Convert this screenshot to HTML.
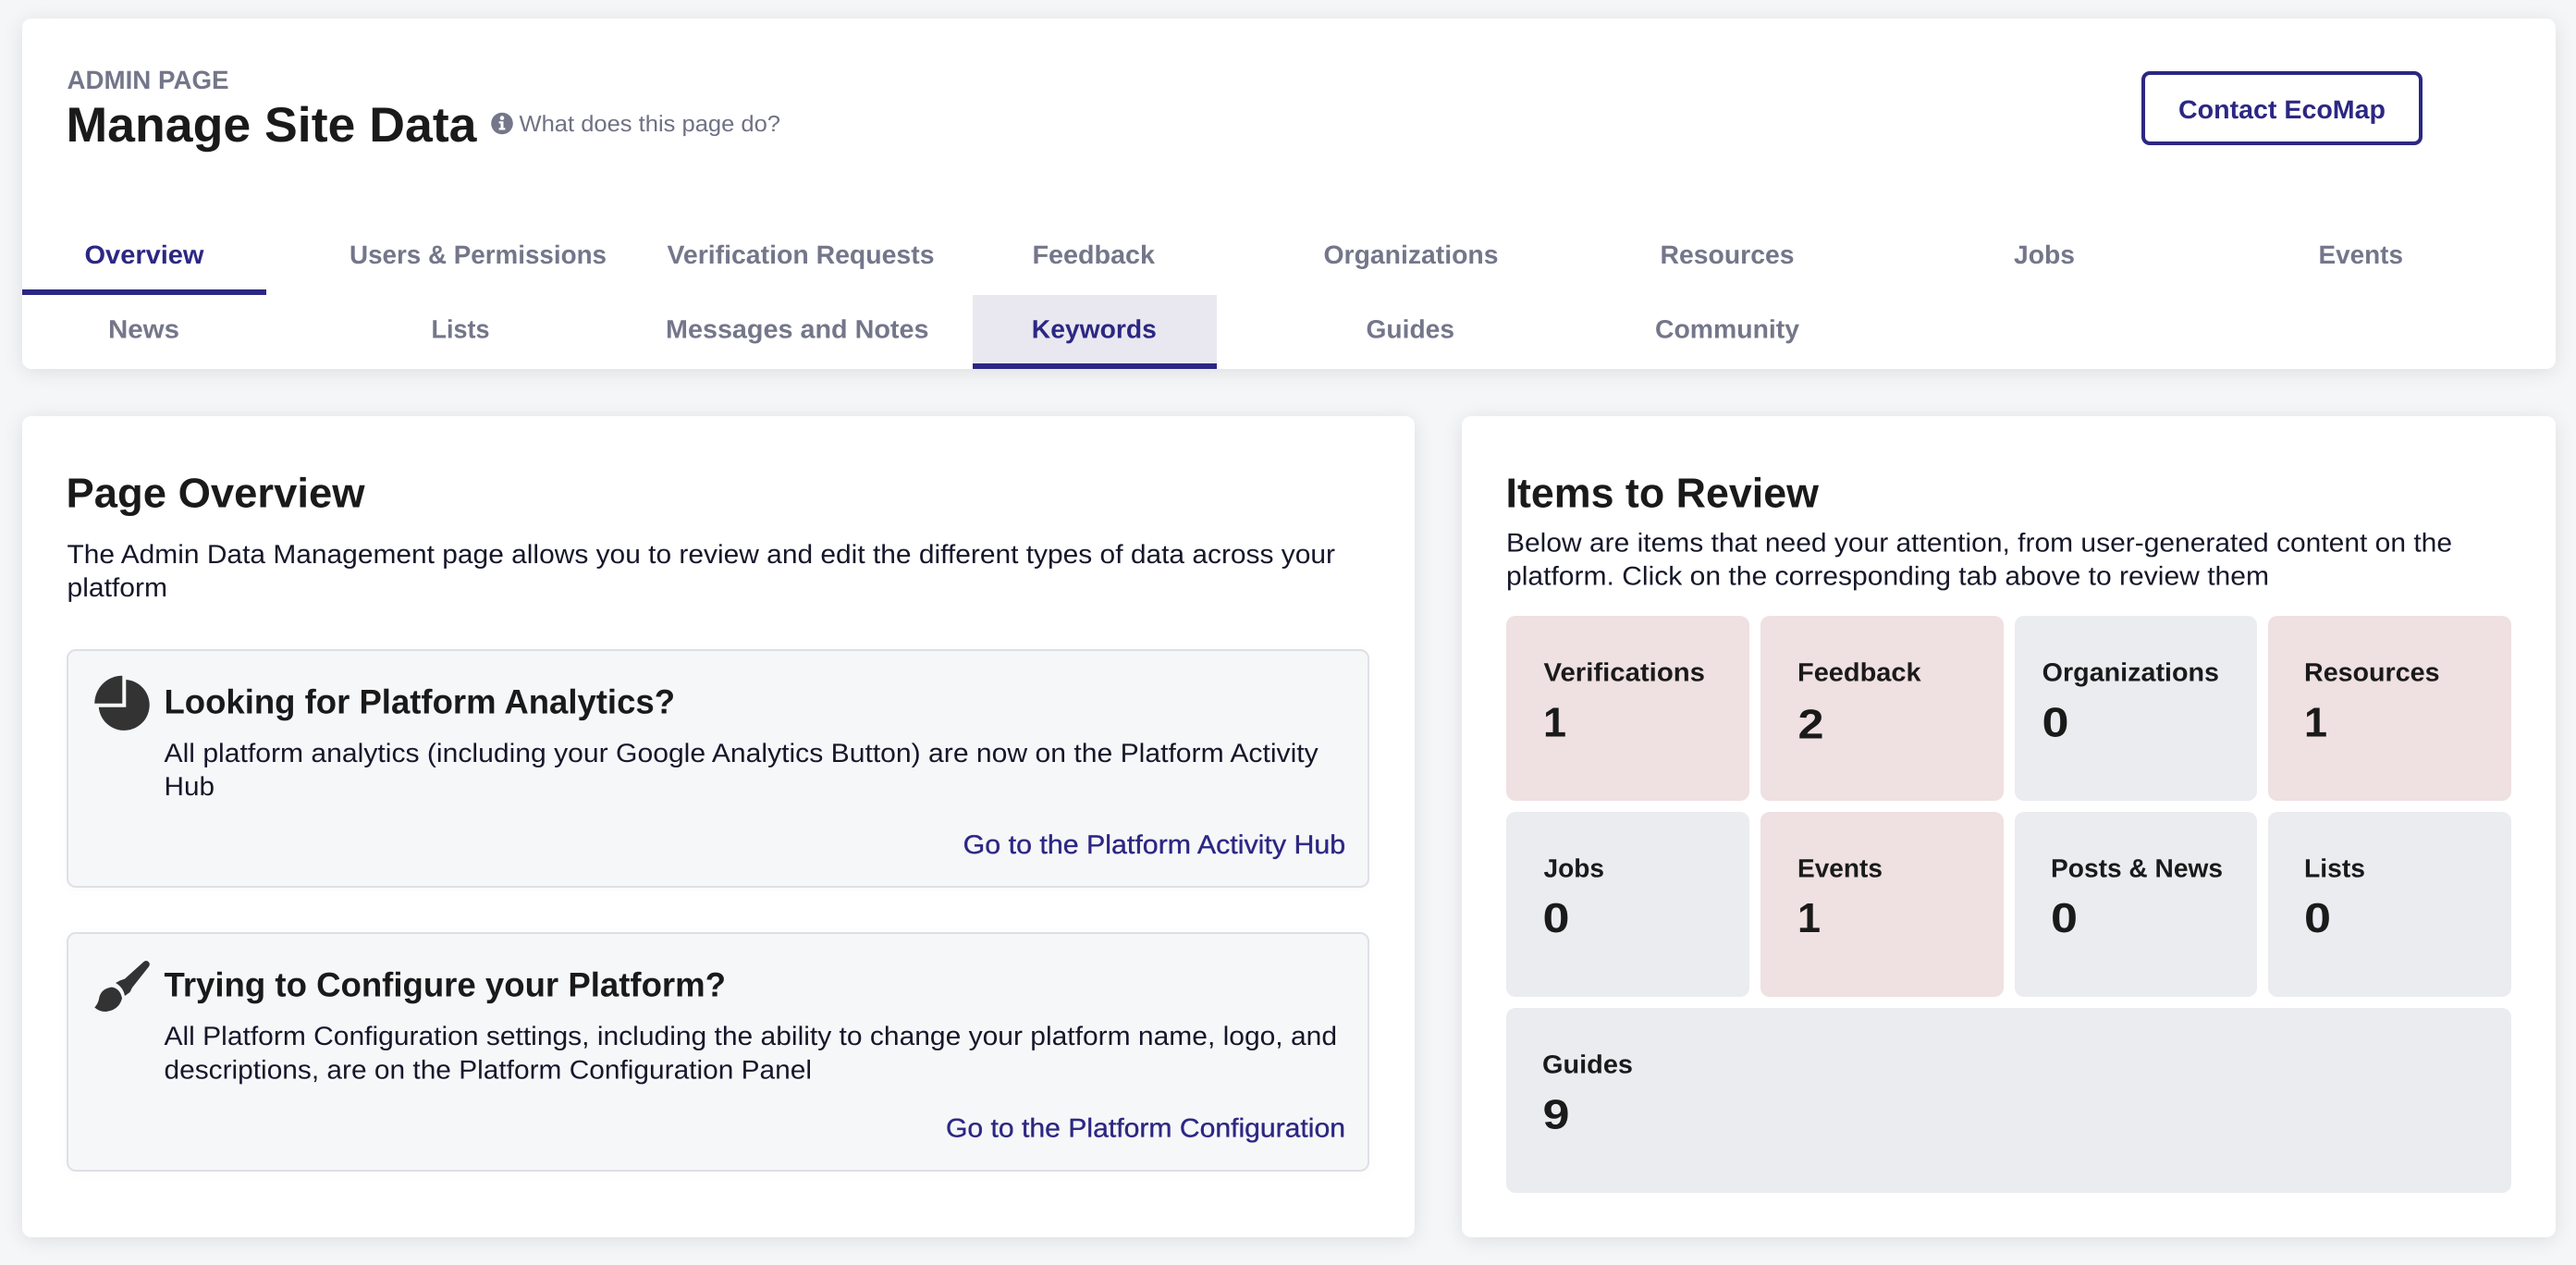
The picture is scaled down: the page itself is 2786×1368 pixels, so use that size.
<!DOCTYPE html>
<html lang="en">
<head>
<meta charset="utf-8">
<title>Manage Site Data</title>
<style>
html,body{margin:0;padding:0;width:2786px;height:1368px;overflow:hidden;background:#f5f6f8}
.abs{position:absolute;box-sizing:border-box}
.card{background:#fff;border-radius:10px;box-shadow:0 3px 22px rgba(0,0,0,.10)}
.inner{background:#f6f7f9;border:2px solid #dfe0e6;border-radius:10px;box-shadow:0 2px 14px rgba(0,0,0,.025)}
.tile{background:#ebecf0;border-radius:10px}
.red{background:#efe0e2}
svg{position:absolute;left:0;top:0}
text{font-family:"Liberation Sans",Arial,sans-serif;white-space:pre;text-rendering:geometricPrecision}
.h1{font-size:53px;font-weight:700;fill:#1a1a1a}
.h2{font-size:45px;font-weight:700;fill:#1a1a1a}
.h3{font-size:37px;font-weight:700;fill:#1a1a1a}
.p{font-size:28.5px;fill:#16172a}
.lnk{font-size:28.5px;fill:#2c2783;stroke:#2c2783;stroke-width:.35}
.tab{font-size:28px;font-weight:700;fill:#74768a}
.on{fill:#2c2783}
.lab{font-size:28px;font-weight:700;fill:#1a1a1a}
.num{font-size:45px;font-weight:700;fill:#1a1a1a}
</style>
</head>
<body>
<div class="abs card" style="left:24px;top:20px;width:2740px;height:379px"></div>
<div class="abs" style="left:24px;top:313px;width:264px;height:6px;background:#2c2783"></div>
<div class="abs" style="left:1052px;top:319px;width:264px;height:80px;background:#e9e8f0;border-bottom:6px solid #2c2783"></div>
<div class="abs" style="left:2316px;top:77px;width:304px;height:80px;border:4px solid #2c2783;border-radius:9px;background:#fff"></div>

<div class="abs card" style="left:24px;top:450px;width:1506px;height:888px"></div>
<div class="abs card" style="left:1581px;top:450px;width:1183px;height:888px"></div>

<div class="abs inner" style="left:72px;top:702px;width:1409px;height:258px"></div>
<div class="abs inner" style="left:72px;top:1008px;width:1409px;height:259px"></div>

<div class="abs tile red" style="left:1629px;top:666px;width:263px;height:200px"></div>
<div class="abs tile red" style="left:1904px;top:666px;width:263px;height:200px"></div>
<div class="abs tile" style="left:2179px;top:666px;width:262px;height:200px"></div>
<div class="abs tile red" style="left:2453px;top:666px;width:263px;height:200px"></div>
<div class="abs tile" style="left:1629px;top:878px;width:263px;height:200px"></div>
<div class="abs tile red" style="left:1904px;top:878px;width:263px;height:200px"></div>
<div class="abs tile" style="left:2179px;top:878px;width:262px;height:200px"></div>
<div class="abs tile" style="left:2453px;top:878px;width:263px;height:200px"></div>
<div class="abs tile" style="left:1629px;top:1090px;width:1087px;height:200px"></div>

<svg width="2786" height="1368" viewBox="0 0 2786 1368" xmlns="http://www.w3.org/2000/svg">
  <!-- header -->
  <text x="72.5" y="96" font-size="28" font-weight="700" fill="#74768a" textLength="175" lengthAdjust="spacingAndGlyphs">ADMIN PAGE</text>
  <text class="h1" x="71.5" y="153" textLength="444" lengthAdjust="spacingAndGlyphs">Manage Site Data</text>
  <circle cx="543" cy="133.5" r="11.8" fill="#74768a"/>
  <circle cx="543" cy="127.6" r="2.3" fill="#fff"/>
  <path d="M539.6 131.2h4.9v7h1.9v2.3h-6.8v-2.3h1.9v-4.7h-1.9z" fill="#fff"/>
  <text x="561.5" y="142" font-size="24.5" fill="#6f7184" textLength="282.5" lengthAdjust="spacingAndGlyphs">What does this page do?</text>
  <text x="2356" y="128" font-size="28" font-weight="700" fill="#2c2783" textLength="224" lengthAdjust="spacingAndGlyphs">Contact EcoMap</text>

  <!-- tabs -->
  <text class="tab on" x="91.5" y="285" textLength="129" lengthAdjust="spacingAndGlyphs">Overview</text>
  <text class="tab" x="378" y="285" textLength="278" lengthAdjust="spacingAndGlyphs">Users &amp; Permissions</text>
  <text class="tab" x="721.5" y="285" textLength="289" lengthAdjust="spacingAndGlyphs">Verification Requests</text>
  <text class="tab" x="1116.5" y="285" textLength="132.5" lengthAdjust="spacingAndGlyphs">Feedback</text>
  <text class="tab" x="1431.5" y="285" textLength="189" lengthAdjust="spacingAndGlyphs">Organizations</text>
  <text class="tab" x="1795.5" y="285" textLength="145" lengthAdjust="spacingAndGlyphs">Resources</text>
  <text class="tab" x="2178" y="285" textLength="66" lengthAdjust="spacingAndGlyphs">Jobs</text>
  <text class="tab" x="2507.5" y="285" textLength="91.5" lengthAdjust="spacingAndGlyphs">Events</text>
  <text class="tab" x="117" y="365.5" textLength="77" lengthAdjust="spacingAndGlyphs">News</text>
  <text class="tab" x="466.5" y="365.5" textLength="63" lengthAdjust="spacingAndGlyphs">Lists</text>
  <text class="tab" x="720" y="365.5" textLength="284.5" lengthAdjust="spacingAndGlyphs">Messages and Notes</text>
  <text class="tab on" x="1115.8" y="365.5" textLength="135" lengthAdjust="spacingAndGlyphs">Keywords</text>
  <text class="tab" x="1477.5" y="365.5" textLength="95.5" lengthAdjust="spacingAndGlyphs">Guides</text>
  <text class="tab" x="1790" y="365.5" textLength="156" lengthAdjust="spacingAndGlyphs">Community</text>

  <!-- page overview -->
  <text class="h2" x="71.5" y="548.3" textLength="323" lengthAdjust="spacingAndGlyphs">Page Overview</text>
  <text class="p" x="72.5" y="609" textLength="1371.5" lengthAdjust="spacingAndGlyphs">The Admin Data Management page allows you to review and edit the different types of data across your</text>
  <text class="p" x="72.5" y="645" textLength="108.5" lengthAdjust="spacingAndGlyphs">platform</text>

  <!-- pie icon -->
  <path d="M102.3 760.7A30 30 0 0 1 132.3 730.7V760.7Z" fill="#333"/>
  <path d="M136.3 735A27.5 27.5 0 1 1 106.8 764.7H136.3Z" fill="#333"/>
  <text class="h3" x="177.5" y="771.7" textLength="552.5" lengthAdjust="spacingAndGlyphs">Looking for Platform Analytics?</text>
  <text class="p" x="177.5" y="824" textLength="1248.2" lengthAdjust="spacingAndGlyphs">All platform analytics (including your Google Analytics Button) are now on the Platform Activity</text>
  <text class="p" x="177.5" y="860" textLength="54.5" lengthAdjust="spacingAndGlyphs">Hub</text>
  <text class="lnk" x="1041.7" y="923" textLength="413.5" lengthAdjust="spacingAndGlyphs">Go to the Platform Activity Hub</text>

  <!-- brush icon -->
  <path d="M155.5 1040Q158.5 1037.7 161 1040.5Q162.8 1043 160.8 1045.5L143 1068L140.5 1073L135 1077Q133.5 1067.5 125 1063L129.5 1060.5L135 1058.5Z" fill="#333"/>
  <path d="M121 1067.5Q110 1069 107.5 1078Q106.5 1085 102.3 1089.5Q108 1094.5 115 1094Q129 1092 132 1079.5Q130 1069 121 1067.5Z" fill="#333"/>
  <text class="h3" x="177.5" y="1077.7" textLength="607.5" lengthAdjust="spacingAndGlyphs">Trying to Configure your Platform?</text>
  <text class="p" x="177.5" y="1130" textLength="1268.5" lengthAdjust="spacingAndGlyphs">All Platform Configuration settings, including the ability to change your platform name, logo, and</text>
  <text class="p" x="177.5" y="1166.7" textLength="700.5" lengthAdjust="spacingAndGlyphs">descriptions, are on the Platform Configuration Panel</text>
  <text class="lnk" x="1023" y="1229.3" textLength="432" lengthAdjust="spacingAndGlyphs">Go to the Platform Configuration</text>

  <!-- items to review -->
  <text class="h2" x="1628.5" y="548.3" textLength="338.5" lengthAdjust="spacingAndGlyphs">Items to Review</text>
  <text class="p" x="1629" y="596.7" textLength="1023" lengthAdjust="spacingAndGlyphs">Below are items that need your attention, from user-generated content on the</text>
  <text class="p" x="1629" y="632.7" textLength="825" lengthAdjust="spacingAndGlyphs">platform. Click on the corresponding tab above to review them</text>

  <text class="lab" x="1669.5" y="736.7" textLength="174.5" lengthAdjust="spacingAndGlyphs">Verifications</text>
  <text class="num" x="1669" y="796.5">1</text>
  <text class="lab" x="1944" y="736.7" textLength="133.6" lengthAdjust="spacingAndGlyphs">Feedback</text>
  <text class="num" x="1944.5" y="798.5" textLength="28" lengthAdjust="spacingAndGlyphs">2</text>
  <text class="lab" x="2208.7" y="736.7" textLength="191.3" lengthAdjust="spacingAndGlyphs">Organizations</text>
  <text class="num" x="2208.5" y="796.5" textLength="29" lengthAdjust="spacingAndGlyphs">0</text>
  <text class="lab" x="2492" y="736.7" textLength="146.5" lengthAdjust="spacingAndGlyphs">Resources</text>
  <text class="num" x="2492" y="796.5">1</text>

  <text class="lab" x="1669.5" y="948.5" textLength="65.5" lengthAdjust="spacingAndGlyphs">Jobs</text>
  <text class="num" x="1668.5" y="1008" textLength="29" lengthAdjust="spacingAndGlyphs">0</text>
  <text class="lab" x="1944" y="948.5" textLength="92" lengthAdjust="spacingAndGlyphs">Events</text>
  <text class="num" x="1944" y="1008">1</text>
  <text class="lab" x="2218" y="948.5" textLength="186" lengthAdjust="spacingAndGlyphs">Posts &amp; News</text>
  <text class="num" x="2218" y="1008" textLength="29" lengthAdjust="spacingAndGlyphs">0</text>
  <text class="lab" x="2492" y="948.5" textLength="66" lengthAdjust="spacingAndGlyphs">Lists</text>
  <text class="num" x="2492" y="1008" textLength="29" lengthAdjust="spacingAndGlyphs">0</text>

  <text class="lab" x="1668" y="1160.7" textLength="98" lengthAdjust="spacingAndGlyphs">Guides</text>
  <text class="num" x="1668.5" y="1220.5" textLength="29" lengthAdjust="spacingAndGlyphs">9</text>
</svg>
</body>
</html>
